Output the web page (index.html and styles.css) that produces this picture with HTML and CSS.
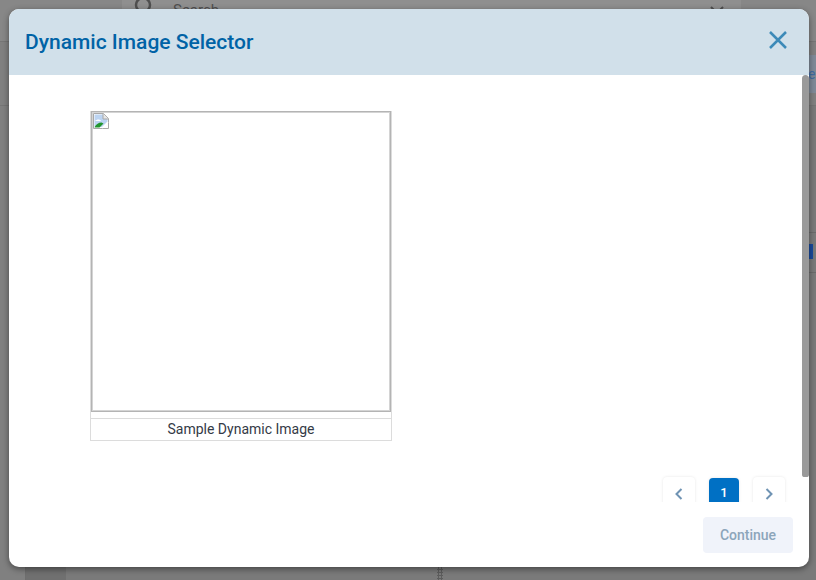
FILE: index.html
```html
<!DOCTYPE html>
<html lang="en">
<head>
  <meta charset="UTF-8" />
  <title>Dynamic Image Selector</title>
  <link rel="stylesheet" href="styles.css">
</head>
<body>
  <!-- dimmed page behind the dialog -->
  <div class="page">
    <div class="topbar">
      <div class="search">
        <svg class="search-icon" width="24" height="24" viewBox="0 0 24 24"><circle cx="10" cy="10" r="7" fill="none" stroke="#4f4f4f" stroke-width="2.500"/><path d="M15 15l6 6" stroke="#4f4f4f" stroke-width="2.500"/></svg>
        <span class="search-text">Search</span>
        <svg class="search-caret" width="16" height="10" viewBox="0 0 16 10"><path d="M2 1l6 6 6-6" fill="none" stroke="#4f4f4f" stroke-width="2"/></svg>
      </div>
    </div>
    <div class="page-main">
      <div class="rail"></div>
      <div class="side"></div>
      <div class="grip"></div>
    </div>
    <div class="edge-tab">e</div>
    <div class="edge-line edge-line-1"></div>
    <div class="edge-line edge-line-2"></div>
    <div class="edge-tick"></div>
  </div>

  <div class="modal">
    <div class="modal-header">
      <h2>Dynamic Image Selector</h2>
      <button class="close-btn" type="button" aria-label="Close">
        <svg width="20" height="20" viewBox="0 0 20 20"><path d="M2 2l16 16M18 2L2 18" stroke="#3d8ab8" stroke-width="2.500" fill="none"/></svg>
      </button>
    </div>
    <div class="modal-body">
      <figure class="thumb">
        <div class="thumb-img">
          <svg class="broken-icon" width="16" height="16" viewBox="0 0 16 16">
            <path d="M0.5 0.5h10l5 5v10h-15z" fill="#fff" stroke="#a8a8a8"/>
            <path d="M1.5 1.5h8.5v4.5h4.5v3l-5 5h-8z" fill="#bcd4f2"/>
            <path d="M2 8c2-2 5-2 6 0H2z" fill="#fff"/>
            <path d="M1.5 14.5c1-3 4-5 7-5l2 1-4 4z" fill="#23962f"/>
            <path d="M10 0.5v5.500h5.500" fill="#e6e6e6" stroke="#a8a8a8"/>
            <path d="M9 15l6-6" stroke="#fff" stroke-width="1.500"/>
          </svg>
        </div>
        <figcaption>Sample Dynamic Image</figcaption>
      </figure>
      <div class="pager">
        <button class="page-btn" type="button">
          <svg width="8" height="12" viewBox="0 0 8 12"><path d="M6.500 1L1.500 6l5 5" fill="none" stroke="#6f93b3" stroke-width="2"/></svg>
        </button>
        <button class="page-btn active" type="button">1</button>
        <button class="page-btn" type="button">
          <svg width="8" height="12" viewBox="0 0 8 12"><path d="M1.500 1l5 5-5 5" fill="none" stroke="#6f93b3" stroke-width="2"/></svg>
        </button>
      </div>
    </div>
    <div class="modal-footer">
      <button class="continue-btn" type="button" disabled>Continue</button>
    </div>
    <div class="scroll-thumb"></div>
  </div>
</body>
</html>
```

FILE: styles.css
```css
html, body {
  margin: 0;
  height: 100%;
  overflow: hidden;
}
body {
  position: relative;
  background-color: #808080;
  font-family: Roboto, sans-serif;
}
button {
  font-family: inherit;
  padding: 0;
  border: none;
}

/* page behind the dialog */
.page {
  height: 580px;
  display: flex;
  flex-direction: column;
  overflow: hidden;
}
.topbar {
  height: 41px;
  padding-left: 122px;
  padding-right: 75px;
  background-color: #878787;
  border-bottom: 1px solid #767676;
}
.search {
  height: 41px;
  background-color: #8f8f8f;
  display: flex;
  align-items: flex-start;
  padding-left: 11px;
  padding-right: 16px;
  color: #4f4f4f;
  font-size: 15px;
}
.search-icon {
  margin-top: -5px;
}
.search-text {
  margin-left: 16px;
  margin-top: 1px;
}
.search-caret {
  margin-left: auto;
  margin-top: 6px;
}
.page-main {
  flex: 1;
  margin-top: 63px;
  border-top: 1px solid #757575;
  display: flex;
  background-color: #7a7a7a;
}
.rail {
  width: 25px;
  background-color: #808080;
  border-right: 1px solid #6e6e6e;
}
.side {
  width: 40px;
  background-color: #707070;
}
.grip {
  width: 6px;
  margin-left: 371px;
  height: 100%;
  background-image: radial-gradient(#5d5d5d 1px, transparent 1.2px);
  background-size: 3px 3px;
}
.edge-tab {
  position: absolute;
  left: 809px;
  top: 55px;
  width: 7px;
  height: 38px;
  background-color: #7f8a98;
  color: #3f6da3;
  font-size: 14px;
  line-height: 38px;
  text-indent: -1px;
  overflow: hidden;
}
.edge-line {
  position: absolute;
  left: 809px;
  width: 7px;
  height: 1px;
  background-color: #6b6b6b;
}
.edge-line-1 {
  top: 232px;
}
.edge-line-2 {
  top: 272px;
}
.edge-tick {
  position: absolute;
  left: 809px;
  top: 244px;
  width: 4px;
  height: 15px;
  background-color: #1a4a9c;
}

/* dialog */
.modal {
  position: absolute;
  left: 9px;
  top: 9px;
  width: 800px;
  height: 558px;
  background-color: #fff;
  border-radius: 10px;
  box-shadow: 0 2px 6px rgba(0, 0, 0, 0.45);
  overflow: hidden;
  display: flex;
  flex-direction: column;
}
.modal-header {
  height: 66px;
  flex-shrink: 0;
  background-color: #d1e0ea;
  display: flex;
  align-items: center;
  justify-content: space-between;
  padding-left: 16px;
  padding-right: 21px;
}
.modal-header h2 {
  margin: 0;
  font-size: 21px;
  font-weight: 500;
  color: #0063a6;
}
.close-btn {
  display: flex;
  background: none;
  margin-top: -4px;
  cursor: pointer;
}
.modal-body {
  height: 427px;
  flex-shrink: 0;
  overflow: hidden;
  padding-top: 36px;
  box-sizing: border-box;
}
.thumb {
  margin: 0 0 0 81px;
  width: 302px;
  box-sizing: border-box;
  border: 1px solid #dcdcdc;
  border-top: none;
}
.thumb-img {
  box-sizing: border-box;
  height: 301px;
  border: 1px solid #b4b4b4;
  box-shadow: inset 0 0 0 1px #d4d4d4;
  padding: 1px;
}
.broken-icon {
  display: block;
}
.thumb figcaption {
  margin-top: 6px;
  height: 21px;
  line-height: 20px;
  border-top: 1px solid #dcdcdc;
  text-align: center;
  font-size: 14px;
  color: #343a46;
}
.pager {
  margin-top: 36px;
  display: flex;
  gap: 14px;
  padding-left: 654px;
}
.page-btn {
  width: 32px;
  height: 40px;
  display: flex;
  justify-content: center;
  align-items: flex-start;
  padding-top: 11px;
  box-sizing: border-box;
  background-color: #fff;
  border-radius: 4px;
  box-shadow: 0 0 3px rgba(0, 0, 0, 0.1);
  cursor: pointer;
}
.page-btn.active {
  width: 30px;
  margin-top: 1px;
  padding-top: 7px;
  background-color: #0070c4;
  color: #fff;
  font-size: 13px;
  font-weight: 500;
}
.modal-footer {
  display: flex;
  justify-content: flex-end;
  padding-top: 15px;
  padding-right: 16px;
}
.continue-btn {
  width: 90px;
  height: 36px;
  background-color: #f0f3fa;
  border-radius: 4px;
  color: #8ca5ba;
  font-size: 14px;
  font-weight: 500;
}
.scroll-thumb {
  position: absolute;
  right: 0;
  top: 66px;
  width: 7px;
  height: 402px;
  background-color: #9a9a9a;
  border-radius: 4px 4px 3px 3px;
}
```
